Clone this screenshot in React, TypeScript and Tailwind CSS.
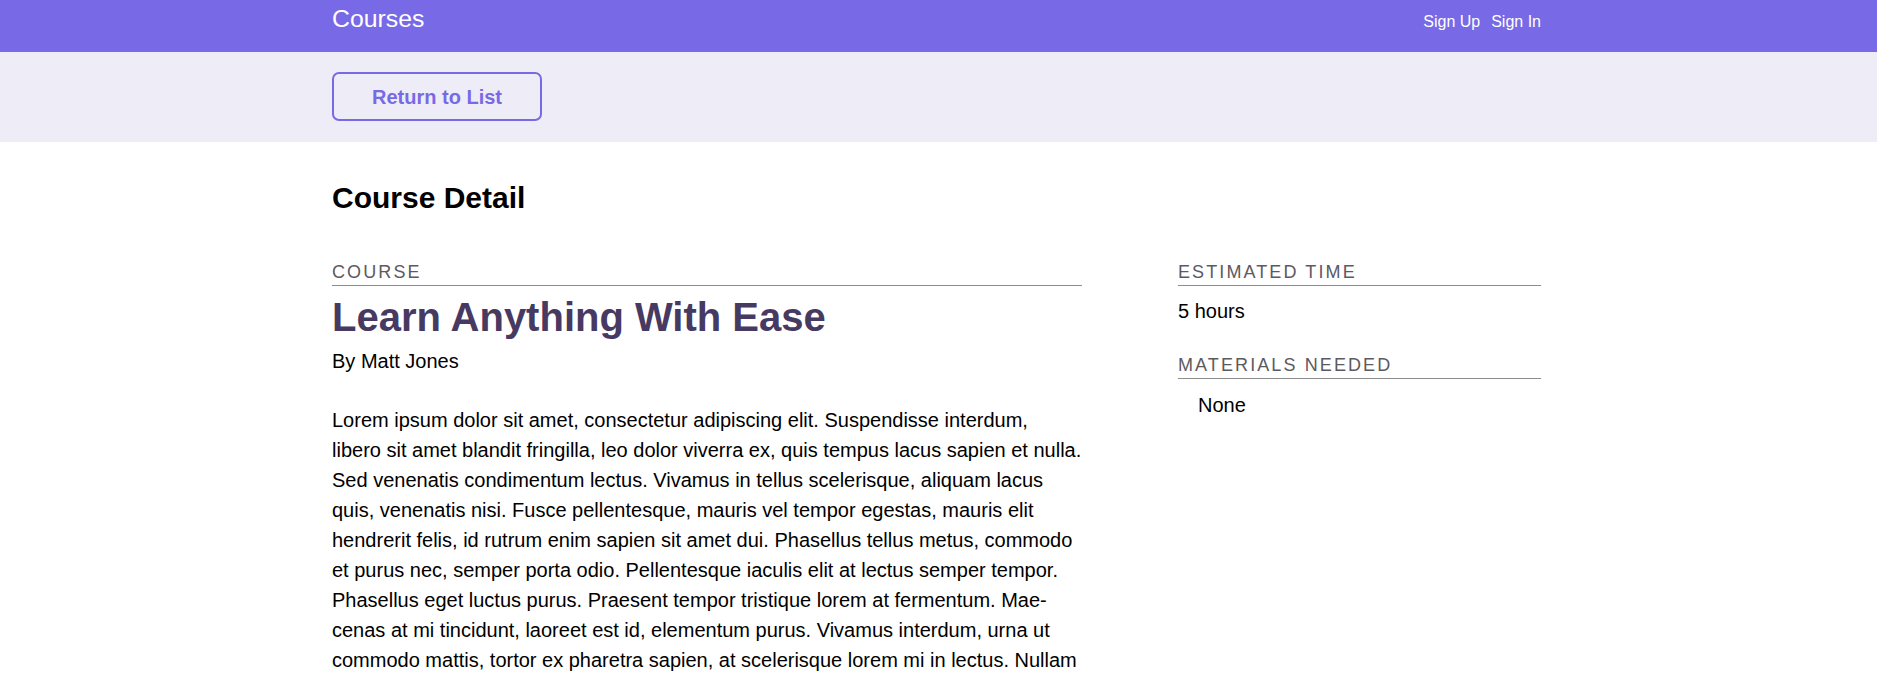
import React from "react";

const font = { fontFamily: '"Liberation Sans", Arial, Helvetica, sans-serif' };

const lorem =
  "Lorem ipsum dolor sit amet, consectetur adipiscing elit. Suspendisse interdum, libero sit amet blandit fringilla, leo dolor viverra ex, quis tempus lacus sapien et nulla. Sed venenatis condimentum lectus. Vivamus in tellus scelerisque, aliquam lacus quis, venenatis nisi. Fusce pellentesque, mauris vel tempor egestas, mauris elit hendrerit felis, id rutrum enim sapien sit amet dui. Phasellus tellus metus, commodo et purus nec, semper porta odio. Pellentesque iaculis elit at lectus semper tempor. Phasellus eget luctus purus. Praesent tempor tristique lorem at fermentum. Mae\u00ADcenas at mi tincidunt, laoreet est id, elementum purus. Vivamus interdum, urna ut commodo mattis, tortor ex pharetra sapien, at scelerisque lorem mi in lectus. Nullam vel aliquet est. Sed vehicula ex vitae purus pharetra, in efficitur enim ultricies. Morbi tempor pretium lectus, eget aliquet mauris facilisis eget.";

function Label({ children, className = "" }: { children: React.ReactNode; className?: string }) {
  return (
    <h4
      className={`text-[18px] leading-[24px] tracking-[2.1px] uppercase text-[#5c5a61] border-b border-[#8c8c8c] pb-[1px] ${className}`}
    >
      {children}
    </h4>
  );
}

export default function App() {
  return (
    <div className="min-h-screen bg-white text-black" style={font}>
      <header className="bg-[#7869e6] h-[52px]">
        <div className="mx-auto w-[1213px] pr-[4px] flex items-baseline justify-between pt-[3px]">
          <h1 className="text-[24.8px] leading-[32px] text-white font-normal">Courses</h1>
          <nav className="flex items-baseline gap-[11px] text-[16px] leading-[24px] text-white">
            <a href="#">Sign Up</a>
            <a href="#">Sign In</a>
          </nav>
        </div>
      </header>

      <div className="bg-[#eeedf7] pt-[20px] pb-[21px]">
        <div className="mx-auto w-[1213px] pr-[4px]">
          <a
            href="#"
            className="flex items-center justify-center w-[210px] h-[49px] rounded-[7px] border-2 border-[#7869e6] text-[#7869e6] text-[20px] font-bold"
          >
            Return to List
          </a>
        </div>
      </div>

      <main className="mx-auto w-[1213px] pr-[4px]">
        <h2 className="mt-[38px] text-[30px] leading-[36px] font-bold">Course Detail</h2>
        <div className="mt-[44px] flex justify-between">
          <div className="w-[750px]">
            <Label>Course</Label>
            <h3 className="mt-[7px] text-[40px] leading-[48px] font-bold text-[#473a62]">
              Learn Anything With Ease
            </h3>
            <p className="mt-[5px] text-[20px] leading-[30px]">By Matt Jones</p>
            <p lang="en" className="mt-[29px] text-[20px] leading-[30px] hyphens-manual">
              {lorem}
            </p>
          </div>
          <div className="w-[363px]">
            <Label>Estimated Time</Label>
            <p className="mt-[10px] text-[20px] leading-[30px]">5 hours</p>
            <Label className="mt-[27px]">Materials Needed</Label>
            <ul className="mt-[11px] pl-[20px] text-[20px] leading-[30px]">
              <li>None</li>
            </ul>
          </div>
        </div>
      </main>
    </div>
  );
}
